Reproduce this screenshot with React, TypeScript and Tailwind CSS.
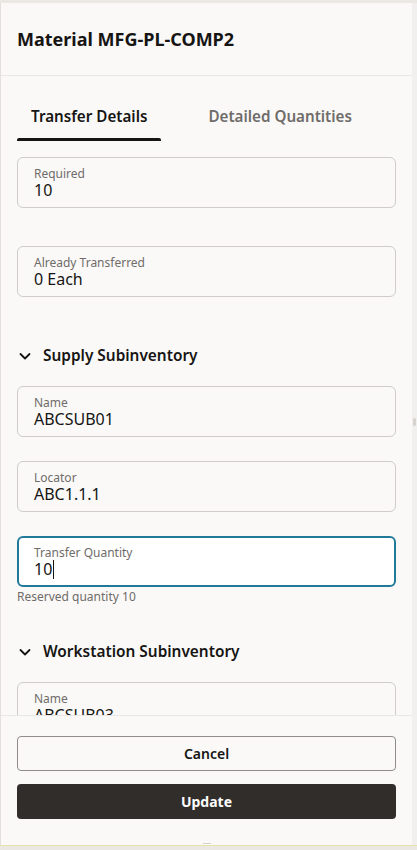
import React from 'react';

const font = { fontFamily: '"Noto Sans", "Open Sans", sans-serif' };

function Field({ label, value, focused }: { label: string; value: string; focused?: boolean }) {
  return (
    <div
      className={
        focused
          ? 'h-[51px] rounded-[6px] border-2 border-[#227a99] bg-white pl-[15px] pt-[8px]'
          : 'h-[51px] rounded-[6px] border border-[#cfccc9] pl-[16px] pt-[9px]'
      }
    >
      <div className="text-[12px] leading-[14px] text-[#6f6c69]">{label}</div>
      <div className="flex items-center text-[16px] leading-[19px] text-[#161513]">
        {value}
        {focused && <span className="ml-px inline-block h-[19px] w-px bg-[#161513]" />}
      </div>
    </div>
  );
}

function Section({ title }: { title: string }) {
  return (
    <div className="flex h-[24px] items-center gap-[11px] pl-px">
      <svg width="14" height="14" viewBox="0 0 14 14" fill="none">
        <path d="M2.5 5l4.5 4.5L11.5 5" stroke="#161513" strokeWidth="1.8" strokeLinecap="round" strokeLinejoin="round" />
      </svg>
      <span className="text-[15.4px] font-semibold text-[#161513]">{title}</span>
    </div>
  );
}

export default function App() {
  return (
    <div className="h-[850px] w-[417px] bg-[#ebe8e3] pt-[3px]" style={font}>
      <div className="flex h-[842px]">
        <div className="flex w-[412px] flex-col border-l border-[#e4e1dd] bg-[#faf9f8]">
          {/* Header */}
          <div className="flex h-[73px] shrink-0 items-center border-b border-[#e9e7e4] px-[16px]">
            <h1 className="text-[18px] font-bold text-[#161513]">Material MFG-PL-COMP2</h1>
          </div>

          {/* Tabs */}
          <div className="flex h-[65px] shrink-0 items-end gap-[33px] px-[16px]">
            <div className="flex h-[36px] flex-col justify-between">
              <span className="px-[14px] text-[15.2px] font-semibold text-[#161513]">Transfer Details</span>
              <div className="h-[3px] rounded-t-[2px] bg-[#161513]" />
            </div>
            <div className="flex h-[36px] flex-col">
              <span className="px-[14px] text-[15.2px] font-semibold text-[#6f6c69]">Detailed Quantities</span>
            </div>
          </div>

          {/* Scrolling content */}
          <div className="flex-1 overflow-hidden px-[16px] pt-[16px]">
            <div className="flex flex-col">
              <Field label="Required" value="10" />
              <div className="h-[38px]" />
              <Field label="Already Transferred" value="0 Each" />
              <div className="h-[47px]" />
              <Section title="Supply Subinventory" />
              <div className="h-[18px]" />
              <Field label="Name" value="ABCSUB01" />
              <div className="h-[24px]" />
              <Field label="Locator" value="ABC1.1.1" />
              <div className="h-[24px]" />
              <Field label="Transfer Quantity" value="10" focused />
              <div className="mt-[2px] text-[12px] leading-[16px] text-[#6f6c69]">Reserved quantity 10</div>
              <div className="h-[35px]" />
              <Section title="Workstation Subinventory" />
              <div className="h-[18px]" />
              <Field label="Name" value="ABCSUB03" />
            </div>
          </div>

          {/* Footer */}
          <div className="flex h-[130px] shrink-0 flex-col gap-[13px] border-t border-[#e9e7e4] px-[16px] pt-[20px]">
            <button className="h-[35px] rounded-[4px] border border-[#8f8c89] text-[14px] font-semibold text-[#161513]">
              Cancel
            </button>
            <button className="h-[35px] rounded-[4px] bg-[#312d2a] text-[14px] font-bold text-white">Update</button>
            <div className="mt-auto flex justify-center pb-[1px]">
              <div className="h-px w-[8px] bg-[#d4d1cd]" />
            </div>
          </div>
        </div>
        <div className="w-[5px] bg-[#f2f0ee] pt-[415px]">
          <div className="ml-[1px] h-[8px] w-[3px] rounded-full bg-[#d6d3cf]" />
        </div>
      </div>
      <div className="h-px bg-[#e7e2a6]" />
    </div>
  );
}
